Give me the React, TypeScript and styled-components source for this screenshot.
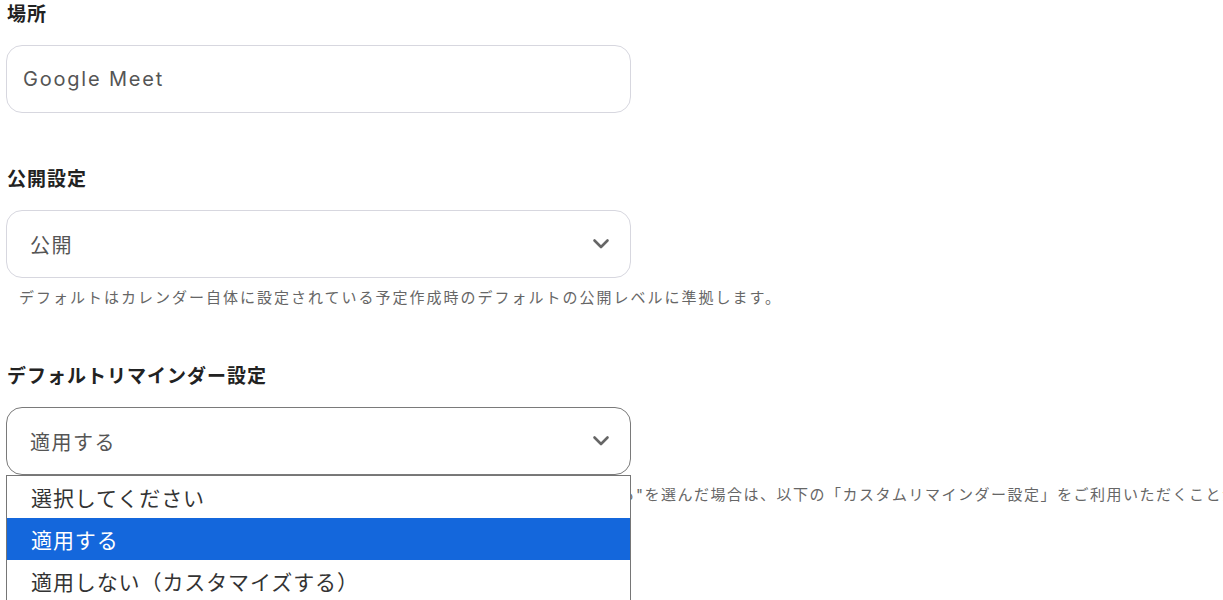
import styled, { createGlobalStyle } from 'styled-components';

const GlobalStyles = createGlobalStyle`
  html, body {
    margin: 0;
    padding: 0;
    background: #fff;
    overflow: hidden;
  }
  body {
    font-family: "Inter", "Noto Sans CJK JP", sans-serif;
    color: #222;
  }
`;

const Page = styled.div`
  box-sizing: border-box;
  width: 100%;
  padding: 0 0 0 6px;
`;

const Group = styled.div`
  margin-bottom: 52px;
`;

const Label = styled.div`
  height: 30px;
  line-height: 30px;
  padding-left: 1px;
  font-size: 19px;
  font-weight: 700;
  letter-spacing: 1px;
  color: #222;
  margin-bottom: 15px;
`;

const Field = styled.div<{ $focused?: boolean; $select?: boolean }>`
  box-sizing: border-box;
  width: 625px;
  height: 68px;
  border: 1px solid ${(p) => (p.$focused ? '#7a7a7a' : '#d7d7df')};
  border-radius: 16px;
  display: flex;
  align-items: center;
  justify-content: space-between;
  padding: ${(p) => (p.$select ? '0 20px 0 23px' : '0 16px')};
  font-size: 20px;
  letter-spacing: ${(p) => (p.$select ? '1.5px' : '1.8px')};
  color: #555;
  background: #fff;
`;

const Help = styled.div<{ $tight?: boolean }>`
  margin-top: 8px;
  padding-left: 13px;
  height: 24px;
  line-height: 24px;
  font-size: 15px;
  letter-spacing: ${(p) => (p.$tight ? '1.5px' : '2px')};
  color: #666;
  white-space: nowrap;
  overflow: hidden;
`;

const Menu = styled.ul`
  position: absolute;
  left: 6px;
  top: 475px;
  box-sizing: border-box;
  width: 625px;
  margin: 0;
  padding: 0;
  list-style: none;
  border: 1px solid #767676;
  background: #fff;
`;

const MenuItem = styled.li<{ $active?: boolean }>`
  height: 42px;
  line-height: 46px;
  padding-left: 24px;
  font-size: 21px;
  letter-spacing: 0.9px;
  color: ${(p) => (p.$active ? '#fff' : '#333')};
  background: ${(p) => (p.$active ? '#1467dc' : '#fff')};
`;

const Chevron = () => (
  <svg width="18" height="12" viewBox="0 0 18 12" fill="none">
    <path d="M2.5 2.5 L9 9 L15.5 2.5" stroke="#666" strokeWidth="2.6" strokeLinecap="round" strokeLinejoin="round" />
  </svg>
);

const App = () => {
  return (
    <>
      <GlobalStyles />
      <Page>
        <Group>
          <Label>場所</Label>
          <Field>Google Meet</Field>
        </Group>

        <Group>
          <Label>公開設定</Label>
          <Field $select>
            <span>公開</span>
            <Chevron />
          </Field>
          <Help>デフォルトはカレンダー自体に設定されている予定作成時のデフォルトの公開レベルに準拠します。</Help>
        </Group>

        <Group>
          <Label>デフォルトリマインダー設定</Label>
          <Field $select $focused>
            <span>適用する</span>
            <Chevron />
          </Field>
          <Help $tight>
            カレンダー自体に設定のデフォルトリマインダーを適用します。"カスタマイズする"を選んだ場合は、以下の「カスタムリマインダー設定」をご利用いただくことができます。
          </Help>
        </Group>
      </Page>
      <Menu>
        <MenuItem>選択してください</MenuItem>
        <MenuItem $active>適用する</MenuItem>
        <MenuItem>適用しない（カスタマイズする）</MenuItem>
      </Menu>
    </>
  );
};

export default App;
